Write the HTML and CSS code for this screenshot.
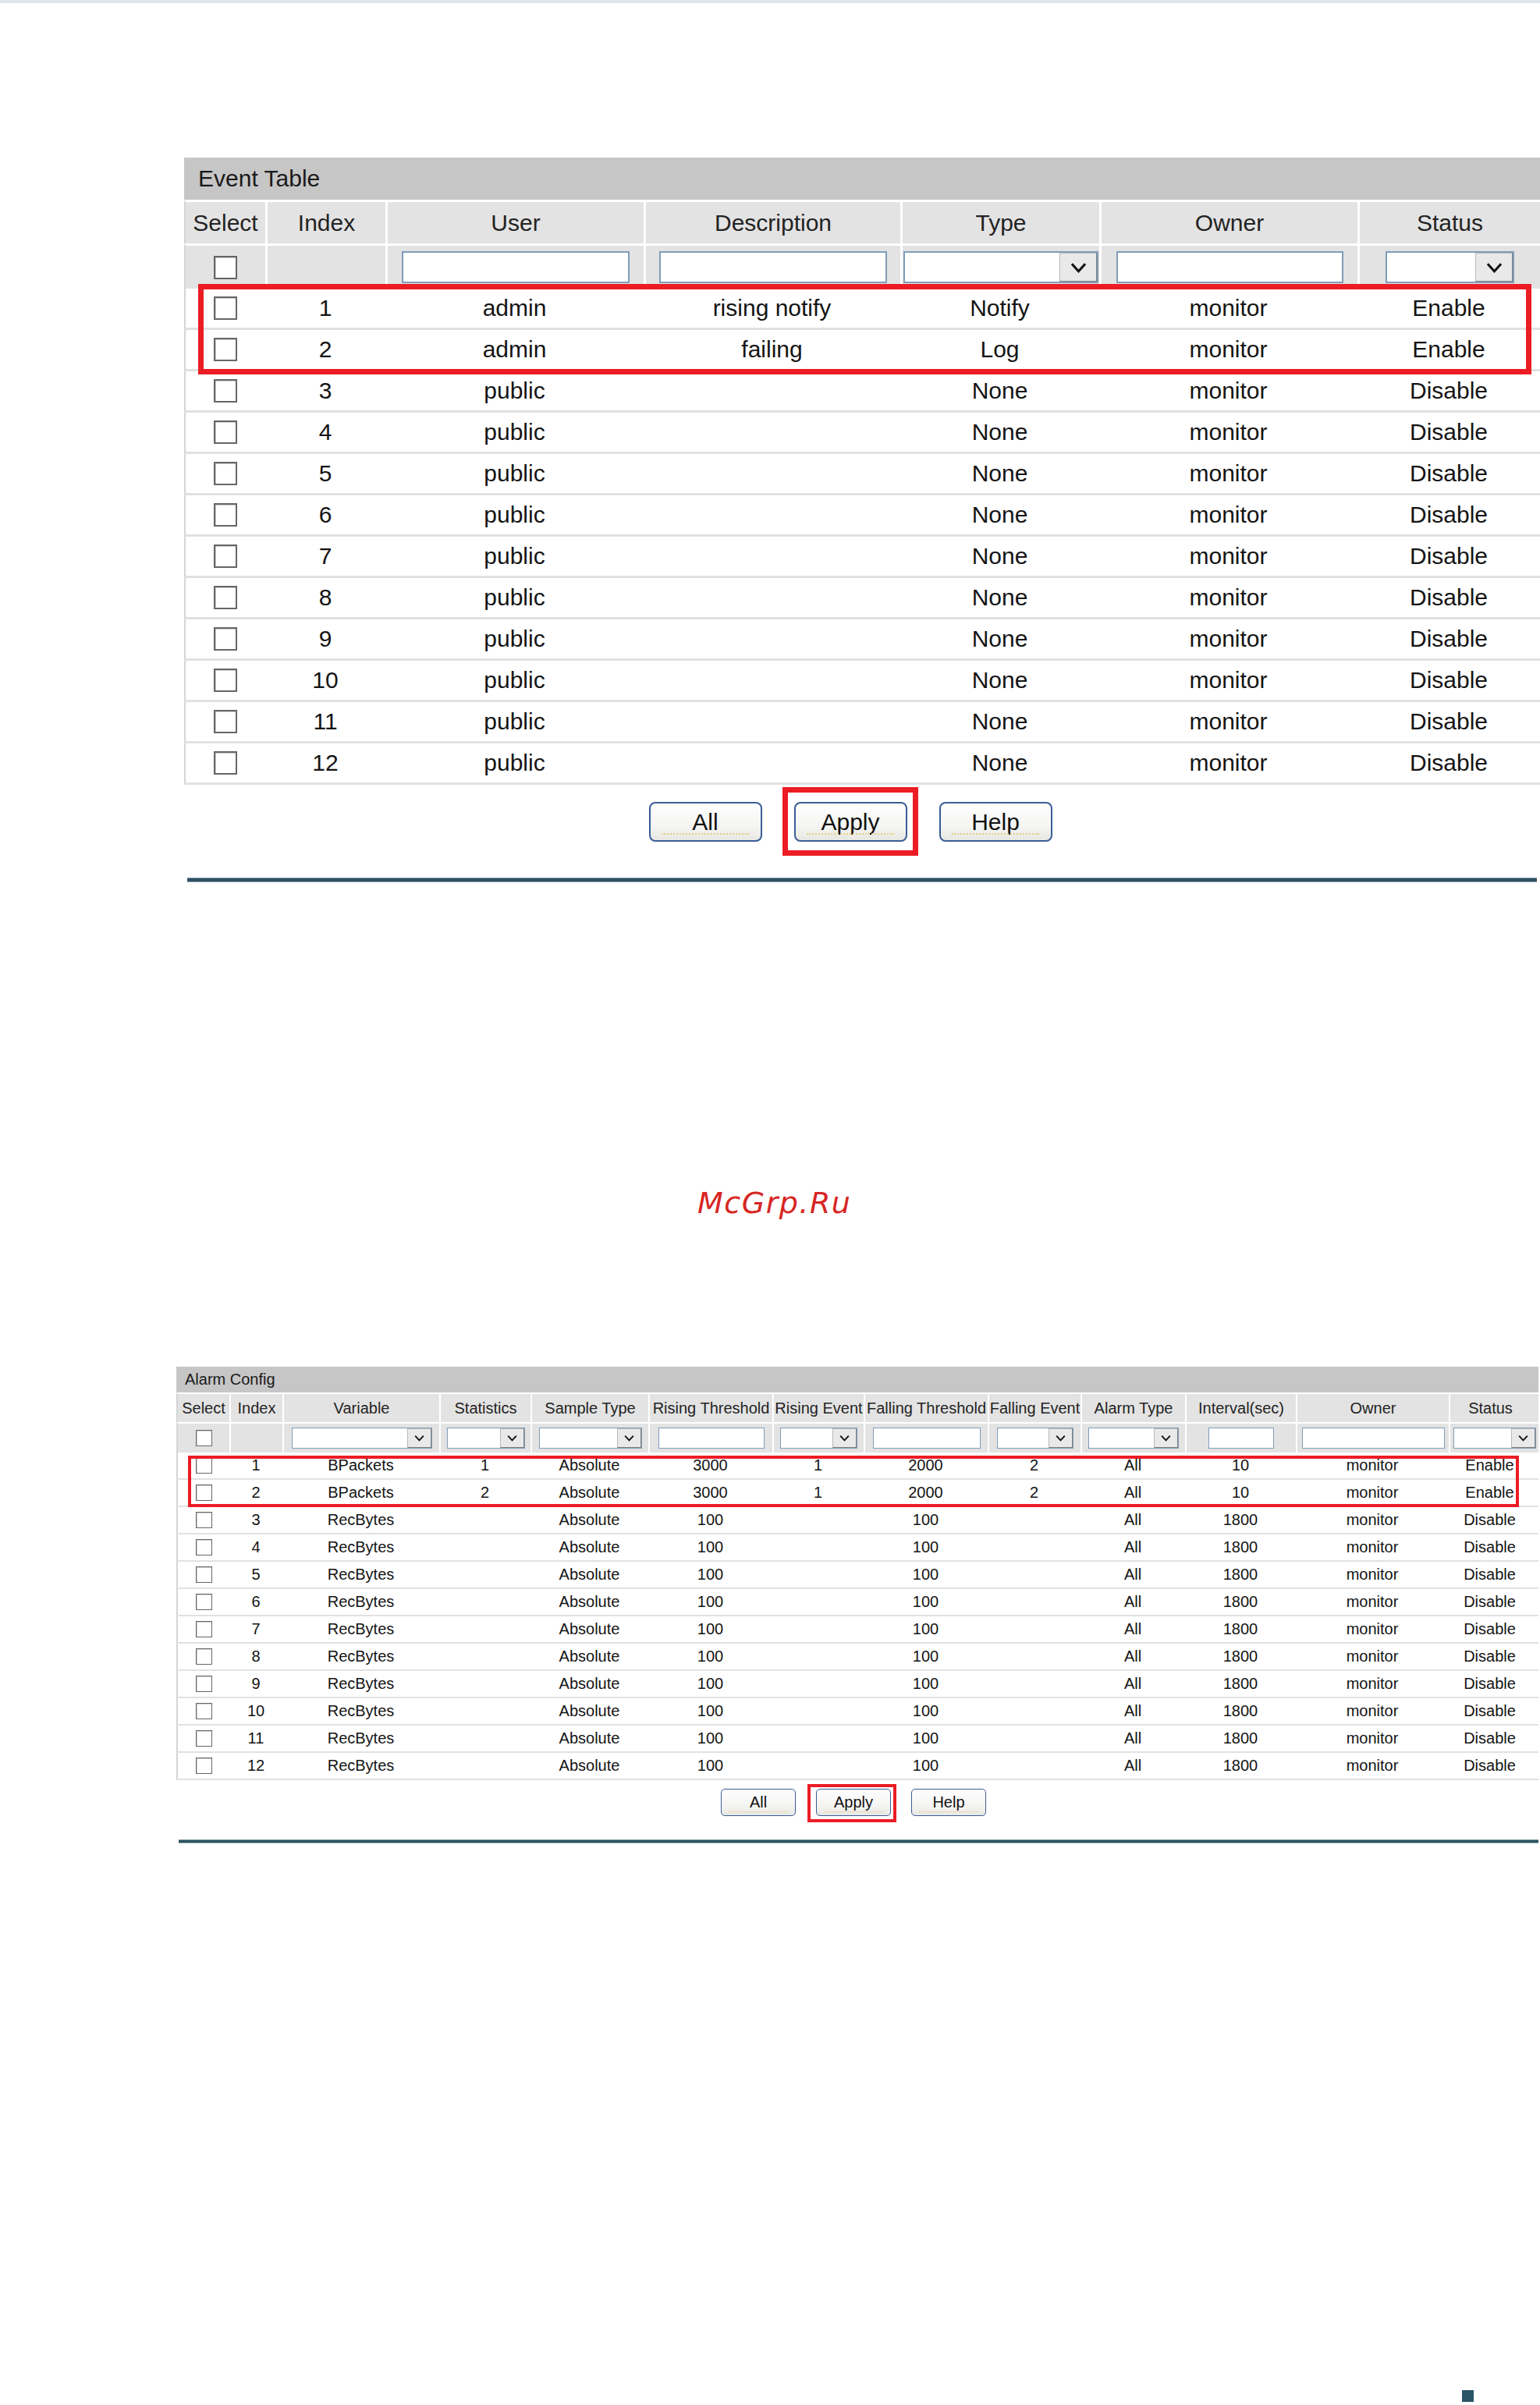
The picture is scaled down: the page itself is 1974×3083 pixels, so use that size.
FILE: index.html
```html
<!DOCTYPE html>
<html lang="en">
<head>
<meta charset="utf-8">
<title>Event Table / Alarm Config</title>
<link rel="stylesheet" href="styles.css">
</head>
<body>
<div class="topline"></div>

<section class="event-wrap">
  <div class="tbl-title">Event Table</div>
  <div class="grid ev">
    <div class="c h">Select</div>
    <div class="c h">Index</div>
    <div class="c h">User</div>
    <div class="c h">Description</div>
    <div class="c h">Type</div>
    <div class="c h">Owner</div>
    <div class="c h">Status</div>

    <div class="c h"><span class="cb"></span></div>
    <div class="c h"></div>
    <div class="c h"><span class="inp w292"></span></div>
    <div class="c h"><span class="inp w292"></span></div>
    <div class="c h"><span class="sel w250"><span class="arr"><svg class="chev" viewBox="0 0 22 14"><path d="M2 2 L11 12 L20 2"/></svg></span></span></div>
    <div class="c h"><span class="inp w291"></span></div>
    <div class="c h"><span class="sel w165"><span class="arr"><svg class="chev" viewBox="0 0 22 14"><path d="M2 2 L11 12 L20 2"/></svg></span></span></div>

    <div class="c"><span class="cb"></span></div><div class="c">1</div><div class="c">admin</div><div class="c">rising notify</div><div class="c">Notify</div><div class="c">monitor</div><div class="c">Enable</div>
    <div class="c"><span class="cb"></span></div><div class="c">2</div><div class="c">admin</div><div class="c">failing</div><div class="c">Log</div><div class="c">monitor</div><div class="c">Enable</div>
    <div class="c"><span class="cb"></span></div><div class="c">3</div><div class="c">public</div><div class="c"></div><div class="c">None</div><div class="c">monitor</div><div class="c">Disable</div>
    <div class="c"><span class="cb"></span></div><div class="c">4</div><div class="c">public</div><div class="c"></div><div class="c">None</div><div class="c">monitor</div><div class="c">Disable</div>
    <div class="c"><span class="cb"></span></div><div class="c">5</div><div class="c">public</div><div class="c"></div><div class="c">None</div><div class="c">monitor</div><div class="c">Disable</div>
    <div class="c"><span class="cb"></span></div><div class="c">6</div><div class="c">public</div><div class="c"></div><div class="c">None</div><div class="c">monitor</div><div class="c">Disable</div>
    <div class="c"><span class="cb"></span></div><div class="c">7</div><div class="c">public</div><div class="c"></div><div class="c">None</div><div class="c">monitor</div><div class="c">Disable</div>
    <div class="c"><span class="cb"></span></div><div class="c">8</div><div class="c">public</div><div class="c"></div><div class="c">None</div><div class="c">monitor</div><div class="c">Disable</div>
    <div class="c"><span class="cb"></span></div><div class="c">9</div><div class="c">public</div><div class="c"></div><div class="c">None</div><div class="c">monitor</div><div class="c">Disable</div>
    <div class="c"><span class="cb"></span></div><div class="c">10</div><div class="c">public</div><div class="c"></div><div class="c">None</div><div class="c">monitor</div><div class="c">Disable</div>
    <div class="c"><span class="cb"></span></div><div class="c">11</div><div class="c">public</div><div class="c"></div><div class="c">None</div><div class="c">monitor</div><div class="c">Disable</div>
    <div class="c"><span class="cb"></span></div><div class="c">12</div><div class="c">public</div><div class="c"></div><div class="c">None</div><div class="c">monitor</div><div class="c">Disable</div>
  </div>
  <div class="hl-rows"></div>
  <div class="btns">
    <button class="btn">All</button>
    <span class="hl-btn"><button class="btn">Apply</button></span>
    <button class="btn">Help</button>
  </div>
</section>
<div class="rule rule-event"></div>

<div class="watermark">McGrp.Ru</div>

<section class="alarm-wrap">
  <div class="tbl-title">Alarm Config</div>
  <div class="grid al">
    <div class="c h">Select</div>
    <div class="c h">Index</div>
    <div class="c h">Variable</div>
    <div class="c h">Statistics</div>
    <div class="c h">Sample Type</div>
    <div class="c h">Rising Threshold</div>
    <div class="c h">Rising Event</div>
    <div class="c h">Falling Threshold</div>
    <div class="c h">Falling Event</div>
    <div class="c h">Alarm Type</div>
    <div class="c h">Interval(sec)</div>
    <div class="c h">Owner</div>
    <div class="c h">Status</div>

    <div class="c h"><span class="cb"></span></div>
    <div class="c h"></div>
    <div class="c h"><span class="sel w180"><span class="arr"><svg class="chev" viewBox="0 0 22 14"><path d="M2 2 L11 12 L20 2"/></svg></span></span></div>
    <div class="c h"><span class="sel w100"><span class="arr"><svg class="chev" viewBox="0 0 22 14"><path d="M2 2 L11 12 L20 2"/></svg></span></span></div>
    <div class="c h"><span class="sel w132"><span class="arr"><svg class="chev" viewBox="0 0 22 14"><path d="M2 2 L11 12 L20 2"/></svg></span></span></div>
    <div class="c h"><span class="inp w136"></span></div>
    <div class="c h"><span class="sel w99"><span class="arr"><svg class="chev" viewBox="0 0 22 14"><path d="M2 2 L11 12 L20 2"/></svg></span></span></div>
    <div class="c h"><span class="inp w138"></span></div>
    <div class="c h"><span class="sel w98"><span class="arr"><svg class="chev" viewBox="0 0 22 14"><path d="M2 2 L11 12 L20 2"/></svg></span></span></div>
    <div class="c h"><span class="sel w116"><span class="arr"><svg class="chev" viewBox="0 0 22 14"><path d="M2 2 L11 12 L20 2"/></svg></span></span></div>
    <div class="c h"><span class="inp w84"></span></div>
    <div class="c h"><span class="inp w183"></span></div>
    <div class="c h st"><span class="sel w106"><span class="arr"><svg class="chev" viewBox="0 0 22 14"><path d="M2 2 L11 12 L20 2"/></svg></span></span></div>

    <div class="c"><span class="cb"></span></div><div class="c">1</div><div class="c">BPackets</div><div class="c">1</div><div class="c">Absolute</div><div class="c">3000</div><div class="c">1</div><div class="c">2000</div><div class="c">2</div><div class="c">All</div><div class="c">10</div><div class="c">monitor</div><div class="c">Enable</div>
    <div class="c"><span class="cb"></span></div><div class="c">2</div><div class="c">BPackets</div><div class="c">2</div><div class="c">Absolute</div><div class="c">3000</div><div class="c">1</div><div class="c">2000</div><div class="c">2</div><div class="c">All</div><div class="c">10</div><div class="c">monitor</div><div class="c">Enable</div>
    <div class="c"><span class="cb"></span></div><div class="c">3</div><div class="c">RecBytes</div><div class="c"></div><div class="c">Absolute</div><div class="c">100</div><div class="c"></div><div class="c">100</div><div class="c"></div><div class="c">All</div><div class="c">1800</div><div class="c">monitor</div><div class="c">Disable</div>
    <div class="c"><span class="cb"></span></div><div class="c">4</div><div class="c">RecBytes</div><div class="c"></div><div class="c">Absolute</div><div class="c">100</div><div class="c"></div><div class="c">100</div><div class="c"></div><div class="c">All</div><div class="c">1800</div><div class="c">monitor</div><div class="c">Disable</div>
    <div class="c"><span class="cb"></span></div><div class="c">5</div><div class="c">RecBytes</div><div class="c"></div><div class="c">Absolute</div><div class="c">100</div><div class="c"></div><div class="c">100</div><div class="c"></div><div class="c">All</div><div class="c">1800</div><div class="c">monitor</div><div class="c">Disable</div>
    <div class="c"><span class="cb"></span></div><div class="c">6</div><div class="c">RecBytes</div><div class="c"></div><div class="c">Absolute</div><div class="c">100</div><div class="c"></div><div class="c">100</div><div class="c"></div><div class="c">All</div><div class="c">1800</div><div class="c">monitor</div><div class="c">Disable</div>
    <div class="c"><span class="cb"></span></div><div class="c">7</div><div class="c">RecBytes</div><div class="c"></div><div class="c">Absolute</div><div class="c">100</div><div class="c"></div><div class="c">100</div><div class="c"></div><div class="c">All</div><div class="c">1800</div><div class="c">monitor</div><div class="c">Disable</div>
    <div class="c"><span class="cb"></span></div><div class="c">8</div><div class="c">RecBytes</div><div class="c"></div><div class="c">Absolute</div><div class="c">100</div><div class="c"></div><div class="c">100</div><div class="c"></div><div class="c">All</div><div class="c">1800</div><div class="c">monitor</div><div class="c">Disable</div>
    <div class="c"><span class="cb"></span></div><div class="c">9</div><div class="c">RecBytes</div><div class="c"></div><div class="c">Absolute</div><div class="c">100</div><div class="c"></div><div class="c">100</div><div class="c"></div><div class="c">All</div><div class="c">1800</div><div class="c">monitor</div><div class="c">Disable</div>
    <div class="c"><span class="cb"></span></div><div class="c">10</div><div class="c">RecBytes</div><div class="c"></div><div class="c">Absolute</div><div class="c">100</div><div class="c"></div><div class="c">100</div><div class="c"></div><div class="c">All</div><div class="c">1800</div><div class="c">monitor</div><div class="c">Disable</div>
    <div class="c"><span class="cb"></span></div><div class="c">11</div><div class="c">RecBytes</div><div class="c"></div><div class="c">Absolute</div><div class="c">100</div><div class="c"></div><div class="c">100</div><div class="c"></div><div class="c">All</div><div class="c">1800</div><div class="c">monitor</div><div class="c">Disable</div>
    <div class="c"><span class="cb"></span></div><div class="c">12</div><div class="c">RecBytes</div><div class="c"></div><div class="c">Absolute</div><div class="c">100</div><div class="c"></div><div class="c">100</div><div class="c"></div><div class="c">All</div><div class="c">1800</div><div class="c">monitor</div><div class="c">Disable</div>
  </div>
  <div class="hl-rows"></div>
  <div class="btns">
    <button class="btn">All</button>
    <span class="hl-btn"><button class="btn">Apply</button></span>
    <button class="btn">Help</button>
  </div>
</section>
<div class="rule rule-alarm"></div>

<div class="page-mark"></div>
</body>
</html>
```
FILE: styles.css
```css
* { box-sizing: border-box; }
html, body { margin: 0; padding: 0; }
body {
  width: 1974px;
  height: 3083px;
  overflow: hidden;
  background: #fff;
  font-family: "Liberation Sans", Arial, sans-serif;
  color: #141414;
}

.topline { height: 4px; background: #dce6ec; }

/* ---------- shared table pieces ---------- */
.tbl-title {
  background: #c6c6c6;
  display: flex;
  align-items: center;
  color: #1a1a1a;
}
.grid { display: grid; }
.c {
  display: flex;
  align-items: center;
  justify-content: center;
  background: #fff;
  white-space: nowrap;
}
.h { background: #e3e3e3; color: #232323; }

.cb {
  display: block;
  background: #fff;
  border: 2px solid #666;
  box-shadow: inset 1px 1px 0 #cfcfcf;
}
.inp, .sel {
  display: flex;
  background: #fff;
  border: 2px solid #7f9db9;
}
.sel { justify-content: flex-end; }
.arr {
  display: flex;
  align-items: center;
  justify-content: center;
  height: 100%;
  background: #e9e9e9;
  border: 1px solid #b9b9b9;
  border-right-color: #808080;
  border-bottom-color: #808080;
}
.chev { fill: none; stroke: #111; stroke-width: 3.2; }

.btns { display: flex; justify-content: center; }
.btn {
  position: relative;
  padding: 0;
  font-family: inherit;
  color: #111;
  border: 2px solid #3a5d96;
  background: linear-gradient(#fefefe, #f4f4f2 65%, #e7e7e2);
}
.btn::after {
  content: "";
  position: absolute;
  left: 10%;
  right: 10%;
  border-bottom: 2px dotted #e7cf86;
}
.hl-btn { position: relative; display: flex; }
.hl-btn::after { content: ""; position: absolute; border-style: solid; border-color: #ec1c24; }
.hl-rows { position: absolute; border-style: solid; border-color: #ec1c24; pointer-events: none; }

.rule {
  background: linear-gradient(#7f97a3 0 1px, #2d5163 1px calc(100% - 1px), #8ea3ad calc(100% - 1px));
}

/* ---------- Event table ---------- */
.event-wrap { position: relative; margin: 198px 0 0 236px; width: 1738px; }
.event-wrap .tbl-title { height: 54px; padding-left: 18px; font-size: 30px; }
.ev {
  grid-template-columns: 104px 154px 331px 329px 255px 331px 234px;
  grid-template-rows: 56px 58px repeat(12, 53px);
  font-size: 30px;
}
.ev .c { border-bottom: 3px solid #e1e1e1; }
.ev .h { border: 0; border-top: 3px solid #fff; border-left: 3px solid #fff; }
.ev > .c:nth-child(7n+1) { border-left: 2px solid #d5d5d5; }
.ev .cb { width: 30px; height: 30px; }
.ev .inp, .ev .sel { height: 41px; }
.ev .arr { width: 48px; }
.ev .chev { width: 21px; height: 14px; }
.w292 { width: 292px; }
.w291 { width: 291px; }
.w250 { width: 250px; }
.w165 { width: 165px; }

.event-wrap .hl-rows { left: 18px; top: 162px; width: 1709px; height: 116px; border-width: 7px; }
.event-wrap .btns { margin-top: 22px; gap: 41px; padding-right: 30px; }
.event-wrap .btn { width: 145px; height: 51px; font-size: 30px; border-radius: 8px; }
.event-wrap .btn::after { bottom: 7px; }
.event-wrap .hl-btn::after { top: -19px; right: -14px; bottom: -18px; left: -15px; border-width: 7px; }

.rule-event { margin: 46px 0 0 240px; width: 1730px; height: 6px; }

/* ---------- watermark ---------- */
.watermark {
  margin-top: 389px;
  padding-left: 894px;
  height: 44px;
  line-height: 44px;
  font-family: "DejaVu Sans", sans-serif;
  font-style: italic;
  font-size: 38px;
  letter-spacing: 1.5px;
  color: #d72623;
}

/* ---------- Alarm config ---------- */
.alarm-wrap { position: relative; margin: 188px 0 0 226px; width: 1746px; }
.alarm-wrap .tbl-title { height: 33px; padding-left: 11px; font-size: 20px; }
.al {
  grid-template-columns: 68px 68px 201px 117px 151px 159px 117px 159px 119px 134px 142px 196px 115px;
  grid-template-rows: 38px 39px repeat(12, 35px);
  font-size: 20px;
}
.al .c { border-bottom: 2px solid #e1e1e1; }
.al .h { border: 0; border-top: 2px solid #fff; border-left: 2px solid #fff; }
.al > .c:nth-child(13n+1) { border-left: 2px solid #d5d5d5; }
.al > .c:nth-child(13n) { padding-right: 10px; }
.al > .c.st { padding-right: 0; }
.al .cb { width: 21px; height: 21px; border-width: 1.5px; }
.al .inp, .al .sel { height: 27px; border-width: 1.5px; }
.al .arr { width: 31px; }
.al .chev { width: 13px; height: 9px; }
.w180 { width: 180px; }
.w100 { width: 100px; }
.w132 { width: 132px; }
.w136 { width: 136px; }
.w99 { width: 99px; }
.w138 { width: 138px; }
.w98 { width: 98px; }
.w116 { width: 116px; }
.w84 { width: 84px; }
.w183 { width: 183px; }
.w106 { width: 106px; }

.alarm-wrap .hl-rows { left: 15px; top: 114px; width: 1706px; height: 66px; border-width: 4px; }
.alarm-wrap .btns { margin-top: 11px; gap: 26px; padding-right: 10px; }
.alarm-wrap .btn { width: 96px; height: 35px; font-size: 20px; border-radius: 5px; border-width: 1.5px; }
.alarm-wrap .btn::after { bottom: 4px; border-bottom-width: 1.5px; }
.alarm-wrap .hl-btn::after { top: -6px; right: -7px; bottom: -8px; left: -11px; border-width: 4px; }

.rule-alarm { margin: 30px 0 0 229px; width: 1743px; height: 5px; }

.page-mark { margin: 701px 0 0 1874px; width: 15px; height: 15px; background: #2a5468; }
```
